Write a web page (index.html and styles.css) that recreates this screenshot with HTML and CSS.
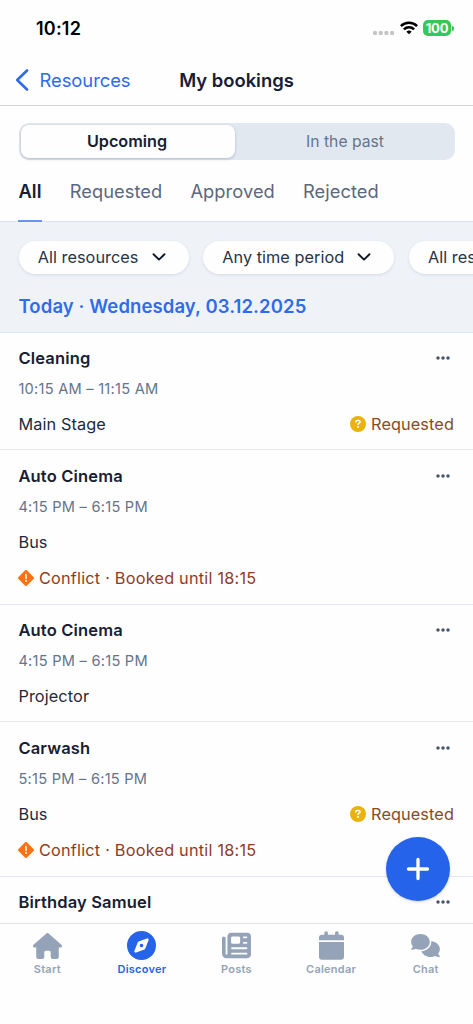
FILE: index.html
```html
<!DOCTYPE html>
<html lang="en">
<head>
<meta charset="utf-8">
<meta name="viewport" content="width=device-width, initial-scale=1">
<title>My bookings</title>
<link rel="stylesheet" href="styles.css">
</head>
<body>
<svg class="sprite" aria-hidden="true">
  <symbol id="chevron-down" viewBox="0 0 14 8"><path d="M1.5 1.2 7 6.6l5.500-5.400" fill="none" stroke="currentColor" stroke-width="1.9" stroke-linecap="round" stroke-linejoin="round"/></symbol>
  <symbol id="dots" viewBox="0 0 14 4"><circle cx="2" cy="2" r="1.75"/><circle cx="7" cy="2" r="1.75"/><circle cx="12" cy="2" r="1.75"/></symbol>
  <symbol id="question" viewBox="0 0 16 16"><circle cx="8" cy="8" r="8" fill="#eab308"/><path d="M5.800 5.900V5.700c0-.8.7-1.200 1.400-1.200h1.300c1 0 1.600.6 1.600 1.400 0 1.200-2.100 1.300-2.100 2.700" fill="none" stroke="#fff" stroke-width="1.500" stroke-linecap="round"/><circle cx="8" cy="11" r="1" fill="#fff"/></symbol>
  <symbol id="conflict" viewBox="0 0 16 16"><path d="M6.900.5a1.600 1.600 0 0 1 2.200 0l6.400 6.400a1.600 1.600 0 0 1 0 2.200l-6.400 6.400a1.600 1.600 0 0 1-2.200 0L.5 9.100a1.600 1.600 0 0 1 0-2.200z" fill="#f97316"/><path d="M8 4.500v4" stroke="#fff" stroke-width="1.500" stroke-linecap="round"/><circle cx="8" cy="11" r="1" fill="#fff"/></symbol>
</svg>
<div class="app">
  <div class="status-bar">
    <span class="clock">10:12</span>
    <div class="indicators">
      <svg class="signal" viewBox="0 0 22 4"><rect x="0" width="4" height="4" rx="1.300"/><rect x="5.700" width="4" height="4" rx="1.300"/><rect x="11.400" width="4" height="4" rx="1.300"/><rect x="17.100" width="4" height="4" rx="1.300"/></svg>
      <svg class="wifi" viewBox="0 0 18 14"><g fill="none" stroke="#000" stroke-width="2.500"><path d="M.9 5.200a11.500 11.500 0 0 1 16.200 0"/><path d="M3.900 8.300a7.200 7.200 0 0 1 10.200 0"/></g><path d="M9 13.300 6.400 10.700a3.700 3.700 0 0 1 5.200 0z"/></svg>
      <span class="battery">100</span><span class="battery-cap"></span>
    </div>
  </div>
  <header class="nav">
    <a class="back"><svg class="back-icon" viewBox="0 0 14 22"><path d="M12 1.500 2.200 11 12 20.500" fill="none" stroke="currentColor" stroke-width="2.600" stroke-linecap="round" stroke-linejoin="round"/></svg><span class="back-label">Resources</span></a>
    <h1 class="nav-title">My bookings</h1>
  </header>
  <div class="segments">
    <button class="segment selected">Upcoming</button>
    <button class="segment past">In the past</button>
  </div>
  <nav class="filters">
    <a class="filter current">All</a>
    <a class="filter">Requested</a>
    <a class="filter">Approved</a>
    <a class="filter">Rejected</a>
  </nav>
  <section class="toolbar">
    <div class="chips">
      <button class="chip"><span>All resources</span><svg class="chevron"><use href="#chevron-down"/></svg></button>
      <button class="chip"><span>Any time period</span><svg class="chevron"><use href="#chevron-down"/></svg></button>
      <button class="chip"><span>All resources</span><svg class="chevron"><use href="#chevron-down"/></svg></button>
    </div>
    <h2 class="date">Today · Wednesday, 03.12.2025</h2>
  </section>
  <main class="bookings">
    <article class="booking">
      <div class="line"><h3 class="title">Cleaning</h3><svg class="more"><use href="#dots"/></svg></div>
      <p class="time">10:15 AM – 11:15 AM</p>
      <div class="line resource"><span>Main Stage</span><span class="requested"><svg class="badge"><use href="#question"/></svg>Requested</span></div>
    </article>
    <article class="booking">
      <div class="line"><h3 class="title">Auto Cinema</h3><svg class="more"><use href="#dots"/></svg></div>
      <p class="time">4:15 PM – 6:15 PM</p>
      <div class="line resource"><span>Bus</span></div>
      <p class="conflict"><svg class="badge"><use href="#conflict"/></svg>Conflict · Booked until 18:15</p>
    </article>
    <article class="booking">
      <div class="line"><h3 class="title">Auto Cinema</h3><svg class="more"><use href="#dots"/></svg></div>
      <p class="time">4:15 PM – 6:15 PM</p>
      <div class="line resource"><span>Projector</span></div>
    </article>
    <article class="booking">
      <div class="line"><h3 class="title">Carwash</h3><svg class="more"><use href="#dots"/></svg></div>
      <p class="time">5:15 PM – 6:15 PM</p>
      <div class="line resource"><span>Bus</span><span class="requested"><svg class="badge"><use href="#question"/></svg>Requested</span></div>
      <p class="conflict"><svg class="badge"><use href="#conflict"/></svg>Conflict · Booked until 18:15</p>
    </article>
    <article class="booking">
      <div class="line"><h3 class="title">Birthday Samuel</h3><svg class="more"><use href="#dots"/></svg></div>
    </article>
  </main>
  <button class="add" aria-label="Add booking"><svg viewBox="0 0 24 24"><path d="M12 2.500v19M2.500 12h19" stroke="#fff" stroke-width="3.300" stroke-linecap="round"/></svg></button>
  <nav class="tabs">
    <a class="tab"><span class="tab-icon"><svg class="i-start" viewBox="0 0 576 512"><path d="M575.8 255.500c0 18-15 32.100-32 32.100h-32l.7 160.200c0 2.700-.2 5.400-.5 8.100V472c0 22.100-17.900 40-40 40H392c-22.100 0-40-17.900-40-40v-88c0-17.700-14.300-32-32-32h-64c-17.700 0-32 14.300-32 32v88c0 22.100-17.900 40-40 40h-80c-22.100 0-40-17.900-40-40V287.600H32c-18 0-32-14-32-32.100 0-9 3-17 10-24L266.400 8c7-7 15-8 22-8s15 2 21 7l255.400 224.500c8 7 12 15 11 24z"/></svg></span>Start</a>
    <a class="tab active"><span class="tab-icon"><svg class="i-discover" viewBox="0 0 512 512"><path fill-rule="evenodd" d="M256 512A256 256 0 1 0 256 0a256 256 0 1 0 0 512zm50.700-186.900L162.400 380.600c-19.400 7.500-38.500-11.600-31-31l55.500-144.300c3.300-8.500 9.900-15.100 18.400-18.400l144.300-55.500c19.400-7.500 38.500 11.600 31 31L325.100 306.700c-3.200 8.500-9.900 15.100-18.400 18.400zM288 256a32 32 0 1 0-64 0 32 32 0 1 0 64 0z"/></svg></span>Discover</a>
    <a class="tab"><span class="tab-icon"><svg class="i-posts" viewBox="0 0 512 512"><path fill-rule="evenodd" d="M96 96c0-35.300 28.700-64 64-64h288c35.300 0 64 28.700 64 64v320c0 35.300-28.700 64-64 64H80c-44.200 0-80-35.800-80-80V128c0-17.700 14.300-32 32-32s32 14.300 32 32v272c0 8.800 7.200 16 16 16s16-7.200 16-16V96zm64 24v80c0 13.300 10.700 24 24 24h112c13.300 0 24-10.700 24-24v-80c0-13.300-10.700-24-24-24H184c-13.300 0-24 10.700-24 24zm208-8c0 8.800 7.200 16 16 16h48c8.800 0 16-7.200 16-16s-7.200-16-16-16h-48c-8.800 0-16 7.200-16 16zm0 96c0 8.800 7.200 16 16 16h48c8.800 0 16-7.200 16-16s-7.200-16-16-16h-48c-8.800 0-16 7.200-16 16zM160 304c0 8.800 7.200 16 16 16h256c8.800 0 16-7.200 16-16s-7.200-16-16-16H176c-8.800 0-16 7.200-16 16zm0 96c0 8.800 7.200 16 16 16h256c8.800 0 16-7.200 16-16s-7.200-16-16-16H176c-8.800 0-16 7.200-16 16z"/></svg></span>Posts</a>
    <a class="tab"><span class="tab-icon"><svg class="i-calendar" viewBox="0 0 448 512"><path d="M96 32v32H48C21.500 64 0 85.500 0 112v48h448v-48c0-26.500-21.500-48-48-48h-48V32c0-17.700-14.300-32-32-32s-32 14.300-32 32v32H160V32c0-17.700-14.300-32-32-32S96 14.300 96 32zm352 160H0v272c0 26.500 21.500 48 48 48h352c26.500 0 48-21.500 48-48V192z"/></svg></span>Calendar</a>
    <a class="tab"><span class="tab-icon"><svg class="i-chat" viewBox="0 0 640 512"><path d="M208 352c114.900 0 208-78.800 208-176S322.900 0 208 0 0 78.800 0 176c0 38.600 14.700 74.300 39.600 103.400-3.500 9.400-8.700 17.700-14.200 24.700-4.800 6.200-9.700 11-13.300 14.300-1.800 1.600-3.300 2.900-4.300 3.700l-1.300 1C1 327.200-1.400 334.400.8 340.900S9.100 352 16 352c21.800 0 43.800-5.600 62.100-12.500 9.200-3.500 17.800-7.400 25.200-11.400C134.100 343.300 169.800 352 208 352zm240-176c0 112.300-99.100 196.900-216.500 207C255.800 457.400 336.400 512 432 512c38.200 0 73.900-8.700 104.700-23.900 7.500 4 16 7.900 25.200 11.400 18.300 6.900 40.300 12.500 62.100 12.500 6.900 0 13.100-4.500 15.200-11.100 2.100-6.600-.2-13.800-5.800-17.900l-1.300-1c-1-.8-2.500-2-4.300-3.700-3.600-3.300-8.500-8.100-13.300-14.300-5.500-7-10.700-15.400-14.200-24.700 24.900-29 39.600-64.700 39.600-103.400 0-92.800-84.900-168.900-192.600-175.500.4 5.100.6 10.300.6 15.500z"/></svg></span>Chat</a>
  </nav>
</div>
</body>
</html>
```

FILE: styles.css
```css
* { box-sizing: border-box; }
body { margin: 0; background: #fefefe; color: #1e293b; font-family: Inter, "Liberation Sans", sans-serif; font-size: 16.300px; }
h1, h2, h3, p { margin: 0; }
button { border: 0; padding: 0; font: inherit; color: inherit; }
svg { display: block; flex: none; fill: currentColor; }
.sprite { position: absolute; width: 0; height: 0; }
.app { position: relative; display: flex; flex-direction: column; width: 473px; height: 1024px; overflow: hidden; }

.status-bar { flex: none; height: 55px; padding: 2px 19px 0 36px; display: flex; align-items: center; justify-content: space-between; }
.clock { color: #000; font-size: 18px; font-weight: 600; letter-spacing: .2px; }
.indicators { display: flex; align-items: center; }
.signal { width: 22px; height: 4px; margin: 8px 5px 0 0; color: #c5c5c8; }
.wifi { width: 18px; height: 14px; margin: -1px 5px 0 0; color: #000; }
.battery { width: 28px; height: 16px; margin-top: -1px; line-height: 16px; border-radius: 5px; background: #34c759; color: #fff; font-size: 13px; font-weight: 700; text-align: center; letter-spacing: -.2px; }
.battery-cap { width: 2px; height: 5px; margin: -1px 0 0 1px; border-radius: 0 2px 2px 0; background: #34c759; }

.nav { flex: none; height: 51px; display: grid; grid-template-columns: 1fr auto 1fr; align-items: center; border-bottom: 1px solid #d3d3d6; }
.back { display: flex; align-items: center; padding-left: 15px; gap: 10.500px; color: #2f6bea; font-size: 18.400px; letter-spacing: -.05px; }
.back-icon { width: 14px; height: 22px; }
.nav-title { font-size: 18.400px; font-weight: 600; color: #172033; }

.segments { flex: none; display: grid; grid-template-columns: 214px 1fr; height: 37px; margin: 17px 18px 0 19px; padding: 2px; border-radius: 10px; background: #e2e8f0; }
.segment { background: none; font-size: 15.700px; }
.segment.selected { padding: 0 2px 1px 0; border-radius: 8px; background: #fefefe; color: #172033; font-size: 16.200px; font-weight: 600; box-shadow: 0 1px 3px #64748b66; }
.past { padding-left: 2px; color: #64748b; }

.filters { flex: none; display: flex; gap: 27.600px; height: 61.500px; padding-left: 18px; border-bottom: 1px solid #dbe2ec; }
.filter { padding: 17.500px 0 0 .5px; line-height: 26px; font-size: 18.300px; letter-spacing: .06px; color: #5a687d; height: 61.500px; }
.filter.current { color: #172033; font-weight: 600; border-bottom: 2px solid #6795f5; }

.toolbar { flex: none; height: 111px; background: #eff3f8; border-bottom: 1px solid #e2e8f0; padding: 19px 0 0 18.500px; overflow: hidden; }
.chips { display: flex; gap: 14.500px; }
.chip { flex: none; display: flex; align-items: center; gap: 13px; height: 33px; padding: 0 23px 0 19.200px; border-radius: 17px; background: #fefefe; color: #273346; letter-spacing: .04px; box-shadow: 0 1px 3px #64748b33; }
.chevron { width: 14px; height: 8px; color: #111827; }
.date { margin-top: 19px; line-height: 26px; font-size: 18.500px; font-weight: 600; letter-spacing: .1px; color: #2f6bea; }

.bookings { flex: 1; min-height: 0; overflow: hidden; }
.booking { padding: 13.500px 19px 13.300px 18.400px; border-bottom: 1px solid #e4e9f0; }
.line { display: flex; align-items: center; justify-content: space-between; height: 24px; }
.title { font-size: 16.500px; font-weight: 600; letter-spacing: .16px; color: #172033; }
.more { width: 14px; height: 4px; margin-right: 4px; color: #475569; }
.time { margin-top: 7px; line-height: 24px; font-size: 14.600px; letter-spacing: .25px; color: #64748b; }
.resource { margin-top: 11px; letter-spacing: .1px; }
.requested, .conflict { display: flex; align-items: center; }
.requested { color: #854d24; gap: 5px; }
.badge { width: 16px; height: 16px; }
.conflict { height: 24px; margin-top: 12.500px; color: #8f3c23; gap: 4.500px; letter-spacing: .21px; }

.add { position: absolute; left: 386px; top: 837px; width: 64px; height: 64px; display: grid; place-items: center; border-radius: 50%; background: #2563eb; box-shadow: 0 1px 3px #0f172a33; }
.add svg { width: 24px; height: 24px; }

.tabs { flex: none; height: 101px; display: grid; grid-template-columns: repeat(5, 1fr); border-top: 1px solid #e2e3e6; }
.tab { display: flex; flex-direction: column; align-items: center; color: #94a3b8; font-size: 11px; font-weight: 600; letter-spacing: .25px; line-height: 15px; }
.tab-icon { height: 37px; padding-top: 6px; margin-bottom: 1px; display: grid; place-items: center; }
.tab.active { color: #2563eb; }
.i-start { width: 29px; height: 26px; }
.i-discover, .i-posts { width: 29px; height: 29px; }
.i-calendar { width: 25px; height: 29px; }
.i-chat { width: 29px; height: 23px; }
```
